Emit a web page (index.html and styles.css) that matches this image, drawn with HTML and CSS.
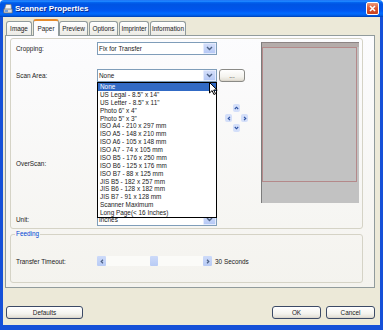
FILE: index.html
```html
<!DOCTYPE html>
<html lang="en">
<head>
  <meta charset="UTF-8" />
  <title>Scanner Properties</title>
  <link rel="stylesheet" href="styles.css">
</head>
<body>

<div class="window">
  <div class="titlebar">
    <svg class="app-icon" width="10" height="11" viewBox="0 0 10 11">
      <path d="M1.5 6L3 1.5h5L8.5 6" fill="#f4f4f4" stroke="#7a7a7a" stroke-width=".7"/>
      <path d="M.8 6h8.4v4H.8z" fill="#dcdcdc" stroke="#666" stroke-width=".7"/>
      <rect x="2" y="7.4" width="3" height="1.2" fill="#3d7bd8"/>
    </svg>
    <span class="title">Scanner Properties</span>
    <span class="close">
      <svg width="7" height="7" viewBox="0 0 7 7"><path d="M1 1l5 5M6 1L1 6" stroke="#fff" stroke-width="1.6"/></svg>
    </span>
  </div>

  <div class="frame">
    <div class="tabs">
      <div class="tab tab-image">Image</div>
      <div class="tab tab-paper active">Paper</div>
      <div class="tab tab-preview">Preview</div>
      <div class="tab tab-options">Options</div>
      <div class="tab tab-imprinter">Imprinter</div>
      <div class="tab tab-info">Information</div>
    </div>

    <div class="panel">
      <fieldset class="group main-group">
        <div class="form-grid">
          <label class="lbl lbl-crop">Cropping:</label>
          <div class="combo combo-crop">
            <span class="combo-text">Fix for Transfer</span>
            <span class="combo-btn">
              <svg width="7" height="5" viewBox="0 0 7 5"><path d="M1 1l2.5 2.5L6 1" fill="none" stroke="#4d6185" stroke-width="1.4"/></svg>
            </span>
          </div>

          <label class="lbl lbl-scan">Scan Area:</label>
          <div class="combo combo-scan">
            <span class="combo-text">None</span>
            <span class="combo-btn">
              <svg width="7" height="5" viewBox="0 0 7 5"><path d="M1 1l2.5 2.5L6 1" fill="none" stroke="#4d6185" stroke-width="1.4"/></svg>
            </span>
            <ul class="list">
              <li class="sel">None</li>
              <li>US Legal - 8.5" x 14"</li>
              <li>US Letter - 8.5" x 11"</li>
              <li>Photo 6" x 4"</li>
              <li>Photo 5" x 3"</li>
              <li>ISO A4 - 210 x 297 mm</li>
              <li>ISO A5 - 148 x 210 mm</li>
              <li>ISO A6 - 105 x 148 mm</li>
              <li>ISO A7 - 74 x 105 mm</li>
              <li>ISO B5 - 176 x 250 mm</li>
              <li>ISO B6 - 125 x 176 mm</li>
              <li>ISO B7 - 88 x 125 mm</li>
              <li>JIS B5 - 182 x 257 mm</li>
              <li>JIS B6 - 128 x 182 mm</li>
              <li>JIS B7 - 91 x 128 mm</li>
              <li>Scanner Maximum</li>
              <li>Long Page(&lt; 16 Inches)</li>
            </ul>
            <svg class="cursor" width="9" height="13" viewBox="0 0 9 13">
              <path d="M.5.5v10.5l2.6-2.4 1.8 3.9 1.6-.7-1.8-3.8h3.5z" fill="#fff" stroke="#000" stroke-width="1"/>
            </svg>
          </div>
          <button class="btn btn-dots">...</button>

          <div class="pad">
            <span class="nudge up"><svg width="5" height="4" viewBox="0 0 5 4"><path d="M.8 3L2.5 1.2 4.2 3" fill="none" stroke="#2a4fa0" stroke-width="1.1"/></svg></span>
            <span class="nudge left"><svg width="4" height="5" viewBox="0 0 4 5"><path d="M3 .8L1.2 2.5 3 4.2" fill="none" stroke="#2a4fa0" stroke-width="1.1"/></svg></span>
            <span class="nudge right"><svg width="4" height="5" viewBox="0 0 4 5"><path d="M1 .8l1.8 1.7L1 4.2" fill="none" stroke="#2a4fa0" stroke-width="1.1"/></svg></span>
            <span class="nudge down"><svg width="5" height="4" viewBox="0 0 5 4"><path d="M.8 1l1.7 1.8L4.2 1" fill="none" stroke="#2a4fa0" stroke-width="1.1"/></svg></span>
          </div>

          <label class="lbl lbl-over">OverScan:</label>

          <label class="lbl lbl-unit">Unit:</label>
          <div class="combo combo-unit">
            <span class="combo-text">Inches</span>
            <span class="combo-btn">
              <svg width="7" height="5" viewBox="0 0 7 5"><path d="M1 1l2.5 2.5L6 1" fill="none" stroke="#4d6185" stroke-width="1.4"/></svg>
            </span>
          </div>

          <div class="preview">
            <div class="page"></div>
          </div>
        </div>
      </fieldset>

      <fieldset class="group feeding">
        <legend>Feeding</legend>
        <div class="feed-row">
          <label class="feed-label">Transfer Timeout:</label>
          <div class="scrollbar">
            <span class="sb-btn"><svg width="4" height="5" viewBox="0 0 4 5"><path d="M3 .8L1.2 2.5 3 4.2" fill="none" stroke="#4d6185" stroke-width="1.2"/></svg></span>
            <span class="track"><span class="thumb"></span></span>
            <span class="sb-btn"><svg width="4" height="5" viewBox="0 0 4 5"><path d="M1 .8l1.8 1.7L1 4.2" fill="none" stroke="#4d6185" stroke-width="1.2"/></svg></span>
          </div>
          <span class="feed-value">30 Seconds</span>
        </div>
      </fieldset>
    </div>

    <div class="footer">
      <button class="btn btn-defaults">Defaults</button>
      <button class="btn btn-ok">OK</button>
      <button class="btn btn-cancel">Cancel</button>
    </div>
  </div>
</div>

</body>
</html>
```

FILE: styles.css
```css
body {
  margin: 0;
  background: #fff;
  font-family: "Liberation Sans", Arial, sans-serif;
  font-size: 6.4px;
  color: #1a1a1a;
}

.window {
  width: 383px;
  height: 330px;
  display: flex;
  flex-direction: column;
}

/* title bar */
.titlebar {
  height: 17px;
  flex: none;
  display: flex;
  align-items: center;
  padding: 0 4px 0 3px;
  border-radius: 4px 4px 0 0;
  background: linear-gradient(#0058ee 0%, #3593ff 5%, #1a82ff 9%, #0262ee 15%, #0054e3 25%, #0055eb 55%, #005bf5 66%, #026afe 78%, #0062ef 88%, #0052d6 94%, #0040ab 100%);
}

.app-icon {
  margin-right: 2px;
}

.title {
  font-size: 8px;
  font-weight: bold;
  color: #fff;
  text-shadow: 1px 1px #0a2a8e;
}

.close {
  margin-left: auto;
  width: 13px;
  height: 13px;
  box-sizing: border-box;
  border: 1px solid #fff;
  border-radius: 2px;
  background: linear-gradient(#ec9a7c, #dc5a34 45%, #c8401e);
  display: flex;
  align-items: center;
  justify-content: center;
}

.frame {
  flex: 1;
  display: flex;
  flex-direction: column;
  background: #ece9d8;
  border: solid #1550d8;
  border-width: 0 3px 5px;
}

/* tabs */
.tabs {
  display: flex;
  align-items: flex-end;
  height: 18px;
  padding-left: 3px;
}

.tab {
  height: 14px;
  box-sizing: border-box;
  margin-right: 1px;
  display: flex;
  align-items: center;
  justify-content: center;
  white-space: nowrap;
  border: 1px solid #919b9c;
  border-bottom: none;
  border-radius: 3px 3px 0 0;
  background: linear-gradient(#fff, #ecebe5);
}

.tab-image { width: 26px; }
.tab-paper { width: 26px; margin-right: 0; }
.tab-preview { width: 29px; }
.tab-options { width: 29px; }
.tab-imprinter { width: 30px; }
.tab-info { width: 36px; }

.tab.active {
  height: 17px;
  margin-bottom: -1px;
  border-top: 2px solid #e68b2c;
  background: #fcfcfe;
  position: relative;
  z-index: 1;
}

.panel {
  margin-left: 2px;
  width: 370px;
  box-sizing: border-box;
  border: 1px solid #919b9c;
  background: linear-gradient(#fcfcfe, #f4f3ee);
  padding: 2px 11px 4px 4px;
}

.group {
  margin: 0;
  min-width: 0;
  border: 1px solid #d5d3c6;
  border-radius: 3px;
}

.main-group {
  padding: 3px 0 2px 5px;
}

.form-grid {
  display: grid;
  grid-template-columns: 81px 120px 44px 98px;
  grid-template-rows: 13px 14px 13px 75px 13px 43px 13px;
}

.lbl {
  align-self: center;
}

.lbl-crop { grid-area: 1 / 1; }
.combo-crop { grid-area: 1 / 2; }
.lbl-scan { grid-area: 3 / 1; }
.combo-scan { grid-area: 3 / 2; z-index: 2; }
.btn-dots { grid-area: 3 / 3; }
.pad { grid-area: 4 / 3; }
.lbl-over { grid-area: 5 / 1; }
.lbl-unit { grid-area: 7 / 1; }
.combo-unit { grid-area: 7 / 2; }

.combo {
  position: relative;
  display: flex;
  align-items: center;
  height: 13px;
  box-sizing: border-box;
  border: 1px solid #7f9db9;
  background: #fff;
  padding-left: 1px;
}

.combo-text {
  flex: 1;
  white-space: nowrap;
}

.combo-btn {
  width: 13px;
  height: 11px;
  box-sizing: border-box;
  border: 1px solid #e4ebfd;
  border-radius: 1px;
  background: linear-gradient(#d2ddf9, #b6c9f6);
  display: flex;
  align-items: center;
  justify-content: center;
}

.list {
  position: absolute;
  top: 12px;
  left: -1px;
  width: 120px;
  box-sizing: border-box;
  margin: 0;
  padding: 0;
  list-style: none;
  border: 1px solid #000;
  background: #fff;
}

.list li {
  height: 7.875px;
  line-height: 7.875px;
  padding-left: 2px;
  white-space: nowrap;
}

.list li.sel {
  background: #316ac5;
  color: #fff;
}

.cursor {
  position: absolute;
  top: 12px;
  left: 111px;
}

.btn {
  font: inherit;
  color: #1a1a1a;
  box-sizing: border-box;
  height: 13px;
  padding: 0;
  border: 1px solid #3c4a66;
  border-radius: 3px;
  background: linear-gradient(#fff, #f4f3ee 60%, #e6e3da 88%, #d6d0c5);
}

.btn-dots {
  width: 26px;
  margin-left: 2px;
  border-color: #8a8a86;
  line-height: 9px;
}

.pad {
  display: grid;
  grid-template-columns: repeat(3, 7px);
  grid-template-rows: repeat(3, 8px);
  column-gap: 1px;
  row-gap: 2px;
  margin: 22px 0 0 8px;
  align-self: start;
  justify-self: start;
}

.nudge {
  border-radius: 2px;
  background: #d4dff9;
  display: flex;
  align-items: center;
  justify-content: center;
}

.nudge.up { grid-area: 1 / 2; }
.nudge.left { grid-area: 2 / 1; }
.nudge.right { grid-area: 2 / 3; }
.nudge.down { grid-area: 3 / 2; }

.preview {
  grid-column: 4;
  grid-row: 1 / 7;
  align-self: start;
  height: 161px;
  box-sizing: border-box;
  border-left: 1px solid #7c7c7c;
  border-top: 1px solid #8c8484;
  padding-top: 4px;
  background: linear-gradient(#b4acaa 0 4px, #c2c2c2 4px);
}

.page {
  width: 95px;
  height: 135px;
  box-sizing: border-box;
  border: 1px solid #b4898a;
}

/* feeding */
.feeding {
  margin-top: 1px;
  padding: 18px 0 16px 5px;
}

.feeding legend {
  padding: 0 1px;
  margin-left: -1px;
  line-height: 8px;
  color: #0046d5;
}

.feed-row {
  display: flex;
  align-items: center;
  height: 10px;
}

.feed-label {
  width: 81px;
}

.scrollbar {
  width: 115px;
  height: 10px;
  display: flex;
  background: #fbfbf8;
}

.sb-btn {
  width: 9px;
  border-radius: 1px;
  background: linear-gradient(#cddaf9, #b8cbf5);
  display: flex;
  align-items: center;
  justify-content: center;
}

.track {
  flex: 1;
  padding-left: 44px;
}

.thumb {
  display: block;
  width: 8px;
  height: 10px;
  border-radius: 1px;
  background: linear-gradient(#cddaf9, #b8cbf5);
}

.feed-value {
  margin-left: 3px;
}

/* footer */
.footer {
  display: flex;
  margin-top: 18px;
  padding: 0 5px 0 3px;
}

.btn-defaults {
  width: 77px;
}

.btn-ok {
  width: 49px;
  margin-left: auto;
}

.btn-cancel {
  width: 49px;
  margin-left: 5px;
}
```
